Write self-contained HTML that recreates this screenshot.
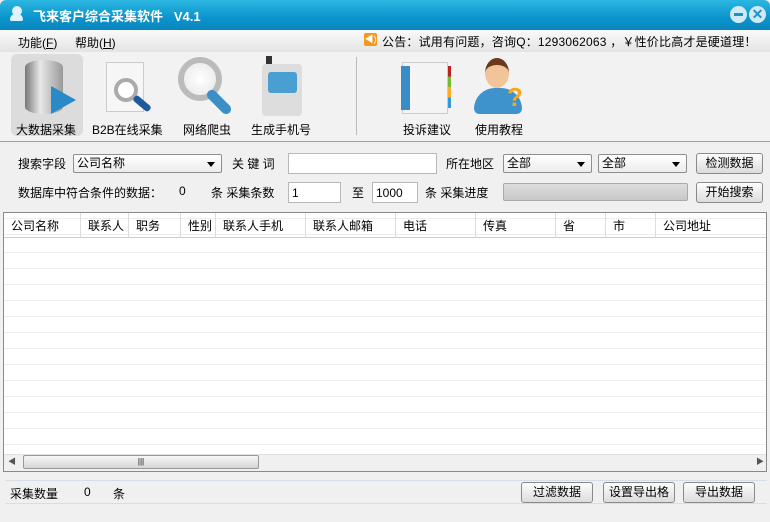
<!DOCTYPE html>
<html><head><meta charset="utf-8"><style>
*{margin:0;padding:0;box-sizing:border-box}
body{width:770px;height:522px;overflow:hidden;background:#f0f0f0;font-family:"Liberation Sans","Noto Sans CJK SC",sans-serif;font-size:12px;color:#000;position:relative}
.a{position:absolute;white-space:nowrap}
.title{left:0;top:0;width:770px;height:30px;background:linear-gradient(#2cb6e2,#0a94cc 60%,#0a86bd);border-radius:6px 6px 0 0}
.menu{left:0;top:30px;width:770px;height:22px;background:linear-gradient(#fafafa,#e4e4e4)}
.tool{left:0;top:52px;width:770px;height:90px;background:#f2f2f2;border-bottom:1px solid #a0a0a0}
.lbl{font-size:12px;color:#000}
.in{background:#fff;border:1px solid #b8b8b8;height:21px}
.sel{background:linear-gradient(#fff,#ececec);border:1px solid #8e8e8e;border-radius:2px;height:19px;padding-left:3px;line-height:17px}
.sel:after{content:"";position:absolute;right:6px;top:7px;border:4px solid transparent;border-top:5px solid #000}
.btn{background:linear-gradient(#fdfdfd,#dcdcdc);border:1px solid #8a8a8a;border-radius:3px;text-align:center;line-height:19px;height:21px}
.grid{left:3px;top:212px;width:764px;height:260px;background:#fff;border:1px solid #8a8a8a}
.th{position:absolute;top:0;height:25px;line-height:27px;border-right:1px solid #ddd;padding-left:7px;border-bottom:1px solid #ccc}
</style></head><body>
<div class="a title"></div>
<div class="a" style="left:12px;top:6px;width:10px;height:10px;border-radius:50%;background:#dff4ff"></div>
<div class="a" style="left:10px;top:14px;width:13px;height:7px;border-radius:6px 6px 2px 2px;background:#dff4ff"></div>
<div class="a" style="left:33px;top:6px;color:#fff;font-weight:bold;font-size:13px">飞来客户综合采集软件 &nbsp;&nbsp;V4.1</div>
<div class="a" style="left:730px;top:6px;width:17px;height:17px;border-radius:50%;background:#cfeaf5;"><div style="position:absolute;left:4px;top:7px;width:9px;height:3px;background:#1a94c8"></div></div>
<div class="a" style="left:749px;top:6px;width:17px;height:17px;border-radius:50%;background:#cfeaf5;color:#1a94c8;font-weight:bold;text-align:center;line-height:17px;font-size:14px">✕</div>
<div class="a menu"></div>
<div class="a" style="left:18px;top:34px">功能(<u>F</u>)</div>
<div class="a" style="left:75px;top:34px">帮助(<u>H</u>)</div>
<div class="a" style="left:364px;top:33px;width:13px;height:13px;background:#f39a1e;border-radius:2px;color:#fff;font-size:9px;line-height:13px;text-align:center">◀)</div>
<div class="a" style="left:382px;top:33px;font-size:12px;letter-spacing:0.2px">公告：试用有问题，咨询Q：1293062063 ，￥性价比高才是硬道理！</div>
<div class="a tool"></div>
<div class="a" style="left:11px;top:54px;width:72px;height:82px;background:#dcdcdc;border-radius:6px"></div>
<div class="a" style="left:25px;top:60px;width:38px;height:54px;border-radius:19px/7px;background:linear-gradient(90deg,#777,#e8e8e8 40%,#999)"></div>
<div class="a" style="left:51px;top:86px;width:0;height:0;border-top:14px solid transparent;border-bottom:14px solid transparent;border-left:25px solid #2a8ac8"></div>
<div class="a" style="left:106px;top:62px;width:38px;height:50px;background:#f6f6f6;border:1px solid #ccc"></div>
<div class="a" style="left:114px;top:78px;width:24px;height:24px;border-radius:50%;border:4px solid #aaa;background:#fff"></div>
<div class="a" style="left:132px;top:100px;width:20px;height:7px;background:#1e5a9c;transform:rotate(40deg);border-radius:3px"></div>
<div class="a" style="left:178px;top:57px;width:44px;height:44px;border-radius:50%;border:6px solid #bbb;background:radial-gradient(#fff,#e6e6e6)"></div>
<div class="a" style="left:204px;top:97px;width:30px;height:10px;background:#3c8fc6;transform:rotate(45deg);border-radius:5px"></div>
<div class="a" style="left:266px;top:56px;width:6px;height:8px;background:#333"></div>
<div class="a" style="left:262px;top:64px;width:40px;height:52px;background:#ddd;border-radius:4px"></div>
<div class="a" style="left:268px;top:72px;width:29px;height:21px;background:#4a9fd2;border-radius:3px"></div>
<div class="a lbl" style="left:16px;top:121px">大数据采集</div>
<div class="a lbl" style="left:92px;top:121px">B2B在线采集</div>
<div class="a lbl" style="left:183px;top:121px">网络爬虫</div>
<div class="a lbl" style="left:251px;top:121px">生成手机号</div>
<div class="a" style="left:356px;top:57px;width:1px;height:78px;background:#bbb"></div>
<div class="a" style="left:402px;top:62px;width:46px;height:52px;background:#f4f4f4;border:1px solid #ccc"></div>
<div class="a" style="left:401px;top:66px;width:9px;height:44px;background:#3a8cc8"></div>
<div class="a" style="left:448px;top:66px;width:3px;height:42px;background:linear-gradient(#b22,#b22 25%,#7b3 25%,#7b3 50%,#fa2 50%,#fa2 75%,#39d 75%)"></div>
<div class="a" style="left:485px;top:58px;width:24px;height:30px;border-radius:50%;background:#f1c49a;border-top:7px solid #6b3a1d"></div>
<div class="a" style="left:474px;top:88px;width:48px;height:26px;border-radius:24px 24px 6px 6px;background:#3f93cc"></div>
<div class="a" style="left:507px;top:82px;color:#f5a81d;font-size:26px;font-weight:bold">?</div>
<div class="a lbl" style="left:403px;top:121px">投诉建议</div>
<div class="a lbl" style="left:475px;top:121px">使用教程</div>
<div class="a" style="left:18px;top:155px">搜索字段</div>
<div class="a sel" style="left:73px;top:154px;width:149px">公司名称</div>
<div class="a" style="left:232px;top:155px">关 键 词</div>
<div class="a in" style="left:288px;top:153px;width:149px"></div>
<div class="a" style="left:446px;top:155px">所在地区</div>
<div class="a sel" style="left:503px;top:154px;width:89px">全部</div>
<div class="a sel" style="left:598px;top:154px;width:89px">全部</div>
<div class="a btn" style="left:696px;top:153px;width:67px">检测数据</div>
<div class="a" style="left:18px;top:184px">数据库中符合条件的数据：</div>
<div class="a" style="left:179px;top:184px">0</div>
<div class="a" style="left:211px;top:184px">条 采集条数</div>
<div class="a in" style="left:288px;top:182px;width:53px;padding:3px">1</div>
<div class="a" style="left:352px;top:184px">至</div>
<div class="a in" style="left:372px;top:182px;width:46px;padding:3px">1000</div>
<div class="a" style="left:425px;top:184px">条 采集进度</div>
<div class="a" style="left:503px;top:183px;width:185px;height:18px;border:1px solid #aaa;border-radius:2px;background:linear-gradient(#ddd,#c8c8c8)"></div>
<div class="a btn" style="left:696px;top:182px;width:67px">开始搜索</div>
<div class="a grid" style="background:#fff repeating-linear-gradient(transparent 0 15px,#eee 15px 16px);background-position:0 24px">
<div class="th" style="left:0;width:77px">公司名称</div>
<div class="th" style="left:77px;width:48px">联系人</div>
<div class="th" style="left:125px;width:52px">职务</div>
<div class="th" style="left:177px;width:35px">性别</div>
<div class="th" style="left:212px;width:90px">联系人手机</div>
<div class="th" style="left:302px;width:90px">联系人邮箱</div>
<div class="th" style="left:392px;width:80px">电话</div>
<div class="th" style="left:472px;width:80px">传真</div>
<div class="th" style="left:552px;width:50px">省</div>
<div class="th" style="left:602px;width:50px">市</div>
<div class="th" style="left:652px;width:110px;border-right:0">公司地址</div>
<div class="a" style="left:0;top:241px;width:762px;height:17px;background:#f0f0f0;border-top:1px solid #e0e0e0"></div>
<div class="a" style="left:4px;top:243px;font-size:8px;color:#555">◀</div>
<div class="a" style="left:752px;top:243px;font-size:8px;color:#555">▶</div>
<div class="a" style="left:19px;top:242px;width:236px;height:14px;border:1px solid #999;border-radius:2px;background:linear-gradient(#f6f6f6,#d6d6d6);text-align:center;font-size:8px;line-height:12px">|||</div>
</div>
<div class="a" style="left:5px;top:480px;width:762px;height:24px;border-top:1px solid #d6dde4;border-bottom:1px solid #d6dde4"></div>
<div class="a" style="left:10px;top:485px">采集数量</div>
<div class="a" style="left:84px;top:485px">0</div>
<div class="a" style="left:113px;top:485px">条</div>
<div class="a btn" style="left:521px;top:482px;width:72px">过滤数据</div>
<div class="a btn" style="left:603px;top:482px;width:72px">设置导出格</div>
<div class="a btn" style="left:683px;top:482px;width:72px">导出数据</div>
</body></html>
